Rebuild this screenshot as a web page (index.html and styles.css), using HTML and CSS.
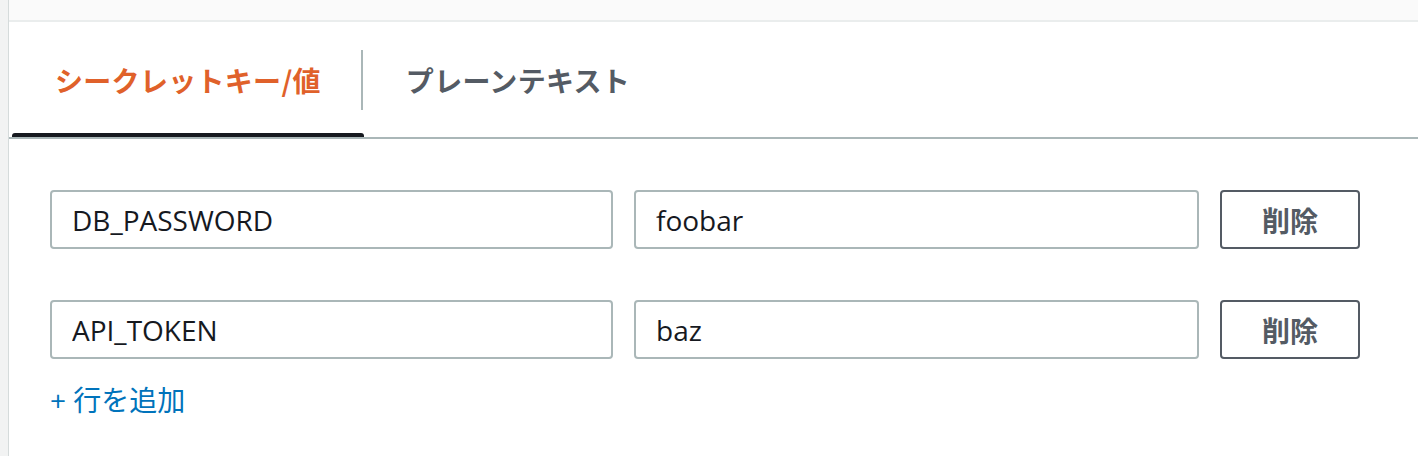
FILE: index.html
```html
<!DOCTYPE html>
<html lang="ja">
<head>
<meta charset="utf-8">
<title>シークレット</title>
<link rel="stylesheet" href="styles.css">
</head>
<body>
<div class="page">
  <aside class="side"></aside>
  <main class="main">
    <div class="topbar"></div>
    <nav class="tabs">
      <div class="tab tab-active">シークレットキー/値</div>
      <div class="tab-divider"></div>
      <div class="tab">プレーンテキスト</div>
    </nav>
    <section class="rows">
      <div class="row">
        <input class="field" type="text" value="DB_PASSWORD">
        <input class="field" type="text" value="foobar">
        <button class="btn" type="button">削除</button>
      </div>
      <div class="row">
        <input class="field" type="text" value="API_TOKEN">
        <input class="field" type="text" value="baz">
        <button class="btn" type="button">削除</button>
      </div>
      <a class="add-link" href="#">+ 行を追加</a>
    </section>
  </main>
</div>
</body>
</html>
```

FILE: styles.css
```css
* { box-sizing: border-box; }
html, body { margin: 0; padding: 0; background: #ffffff; }
body {
  font-family: "Open Sans", "Noto Sans CJK JP", sans-serif;
  color: #16191f;
  width: 1418px;
  height: 456px;
  overflow: hidden;
}
.page {
  display: flex;
  height: 456px;
}
.side {
  width: 9px;
  flex: none;
  background: #f2f3f3;
  border-right: 1px solid #d5dbdb;
}
.main {
  flex: 1;
  display: flex;
  flex-direction: column;
}
.topbar {
  height: 22px;
  background: #fafafa;
  border-bottom: 2px solid #eaeded;
}
.tabs {
  display: flex;
  align-items: center;
  height: 117px;
  border-bottom: 2px solid #aab7b8;
  padding-left: 3px;
}
.tab {
  position: relative;
  height: 115px;
  display: flex;
  align-items: center;
  padding: 0 42px 0 42px;
  font-size: 28px;
  font-weight: 700;
  letter-spacing: 0.3px;
  color: #545b64;
  font-family: "Noto Sans CJK JP", sans-serif;
}
.tab-active {
  color: #e0612a;
  padding: 0 43px 0 43px;
}
.tab-active::after {
  content: "";
  position: absolute;
  left: 0;
  right: 0;
  bottom: 0;
  height: 4px;
  background: #16191f;
  border-radius: 3px 3px 0 0;
}
.tab-divider {
  width: 2px;
  height: 60px;
  background: #aab7b8;
  margin-left: -3px;
  margin-right: 1px;
}
.rows {
  padding: 51px 58px 0 41px;
  display: flex;
  flex-direction: column;
}
.row {
  display: grid;
  grid-template-columns: 563px 565px 140px;
  column-gap: 21px;
  margin-bottom: 51px;
}
.row:nth-of-type(2) { margin-bottom: 22px; }
.field {
  height: 59px;
  border: 2px solid #aab7b8;
  border-radius: 4px;
  padding: 0 20px;
  font-family: "Open Sans", "Noto Sans CJK JP", sans-serif;
  font-size: 28px;
  color: #16191f;
  background: #ffffff;
  outline: none;
  width: 100%;
}
.btn {
  height: 59px;
  border: 2px solid #545b64;
  border-radius: 4px;
  background: #ffffff;
  color: #545b64;
  font-family: "Noto Sans CJK JP", sans-serif;
  font-size: 28px;
  font-weight: 700;
  padding: 0;
}
.add-link {
  align-self: flex-start;
  font-family: "Open Sans", "Noto Sans CJK JP", sans-serif;
  font-size: 28px;
  line-height: 38px;
  color: #0073bb;
  text-decoration: none;
}
```
